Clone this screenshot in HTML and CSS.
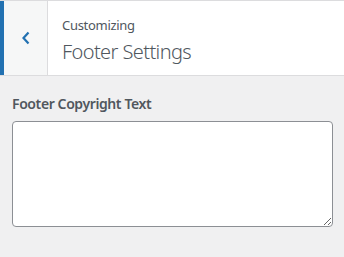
FILE: index.html
```html
<!DOCTYPE html>
<html>

<head>
    <title>Customizing Footer Settings</title>
    <link rel="stylesheet" href="styles.css">
</head>

<body>
    <div class="panel">
        <div class="panel-header">
            <button type="button" class="back-button" aria-label="Back">
                <svg width="12" height="14" viewBox="0 0 12 14">
                    <path d="M8.5 1.5 L3.5 7 L8.5 12.5" fill="none" stroke="#2271b1" stroke-width="2.2"/>
                </svg>
            </button>
            <div class="panel-title">
                <span class="title-action">Customizing</span>
                <h3 class="title-name">Footer Settings</h3>
            </div>
        </div>
        <div class="panel-body">
            <label class="control-label" for="footerCopyright">Footer Copyright Text</label>
            <textarea id="footerCopyright" class="control-textarea"></textarea>
        </div>
    </div>
</body>

</html>
```

FILE: styles.css
```css
body {
    margin: 0;
    font-family: "Noto Sans", "Open Sans", sans-serif;
    background-color: #f0f0f1;
    color: #50575e;
}

.panel-header {
    display: flex;
    height: 74px;
    background-color: #fff;
    border-top: 1px solid #dcdcde;
    border-bottom: 1px solid #dcdcde;
}

.back-button {
    width: 48px;
    padding: 0;
    margin: 0;
    background-color: #f6f7f7;
    border: none;
    border-left: 4px solid #2271b1;
    border-right: 1px solid #dcdcde;
    display: flex;
    justify-content: center;
    align-items: center;
    cursor: pointer;
}

.panel-title {
    display: flex;
    flex-direction: column;
    padding: 14px 0 0 14px;
}

.title-action {
    font-size: 13px;
    line-height: 20px;
    letter-spacing: -0.3px;
    color: #50575e;
}

.title-name {
    margin: 4px 0 0;
    font-size: 20px;
    font-weight: 300;
    line-height: 26px;
    letter-spacing: -0.6px;
    color: #50575e;
}

.panel-body {
    display: flex;
    flex-direction: column;
    padding: 16px 11px 0 12px;
}

.control-label {
    font-size: 14px;
    font-weight: 600;
    line-height: 24px;
    letter-spacing: -0.4px;
    color: #50575e;
    margin-bottom: 5px;
}

.control-textarea {
    height: 106px;
    box-sizing: border-box;
    border: 1px solid #8c8f94;
    border-radius: 4px;
    background-color: #fff;
    resize: vertical;
}
```
